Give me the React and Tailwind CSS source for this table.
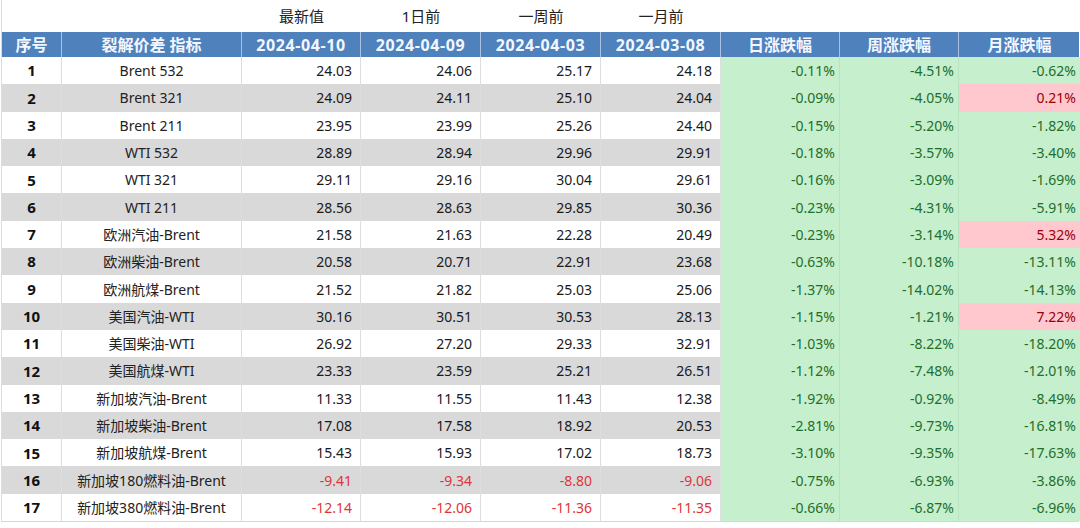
import React from "react";

const rows = [
  [1, "Brent 532", "24.03", "24.06", "25.17", "24.18", "-0.11%", "-4.51%", "-0.62%"],
  [2, "Brent 321", "24.09", "24.11", "25.10", "24.04", "-0.09%", "-4.05%", "0.21%"],
  [3, "Brent 211", "23.95", "23.99", "25.26", "24.40", "-0.15%", "-5.20%", "-1.82%"],
  [4, "WTI 532", "28.89", "28.94", "29.96", "29.91", "-0.18%", "-3.57%", "-3.40%"],
  [5, "WTI 321", "29.11", "29.16", "30.04", "29.61", "-0.16%", "-3.09%", "-1.69%"],
  [6, "WTI 211", "28.56", "28.63", "29.85", "30.36", "-0.23%", "-4.31%", "-5.91%"],
  [7, "欧洲汽油-Brent", "21.58", "21.63", "22.28", "20.49", "-0.23%", "-3.14%", "5.32%"],
  [8, "欧洲柴油-Brent", "20.58", "20.71", "22.91", "23.68", "-0.63%", "-10.18%", "-13.11%"],
  [9, "欧洲航煤-Brent", "21.52", "21.82", "25.03", "25.06", "-1.37%", "-14.02%", "-14.13%"],
  [10, "美国汽油-WTI", "30.16", "30.51", "30.53", "28.13", "-1.15%", "-1.21%", "7.22%"],
  [11, "美国柴油-WTI", "26.92", "27.20", "29.33", "32.91", "-1.03%", "-8.22%", "-18.20%"],
  [12, "美国航煤-WTI", "23.33", "23.59", "25.21", "26.51", "-1.12%", "-7.48%", "-12.01%"],
  [13, "新加坡汽油-Brent", "11.33", "11.55", "11.43", "12.38", "-1.92%", "-0.92%", "-8.49%"],
  [14, "新加坡柴油-Brent", "17.08", "17.58", "18.92", "20.53", "-2.81%", "-9.73%", "-16.81%"],
  [15, "新加坡航煤-Brent", "15.43", "15.93", "17.02", "18.73", "-3.10%", "-9.35%", "-17.63%"],
  [16, "新加坡180燃料油-Brent", "-9.41", "-9.34", "-8.80", "-9.06", "-0.75%", "-6.93%", "-3.86%"],
  [17, "新加坡380燃料油-Brent", "-12.14", "-12.06", "-11.36", "-11.35", "-0.66%", "-6.87%", "-6.96%"],
];

const grid =
  "grid grid-cols-[60px_180px_119px_120px_120px_120px_119px_119px_121px]";

const headers = ["序号", "裂解价差 指标", "2024-04-10", "2024-04-09", "2024-04-03", "2024-03-08", "日涨跌幅", "周涨跌幅", "月涨跌幅"];

export default function App() {
  return (
    <div
      className="w-[1080px] h-[528px] bg-white overflow-hidden text-[#1a1a1a]"
      style={{ fontFamily: '"Noto Sans", "Noto Sans CJK SC", sans-serif' }}
    >
      <div className="ml-px w-[1078px] border-l border-[#dcdcdc]">
        {/* title row */}
        <div className={`${grid} h-[32px] items-center text-[15px] text-[#222]`}>
          <div />
          <div />
          <div className="text-center">最新值</div>
          <div className="text-center">1日前</div>
          <div className="text-center">一周前</div>
          <div className="text-center">一月前</div>
          <div />
          <div />
          <div />
        </div>
        {/* header */}
        <div className={`${grid} h-[25px] bg-[#4f81bd] text-[#f2f7ff] font-bold`}>
          {headers.map((h, i) => (
            <div
              key={i}
              className={`flex items-center justify-center leading-none ${
                i < 2 ? "text-[16px]" : i < 6 ? "text-[16px] tracking-[0.6px]" : "text-[16px]"
              } ${i < 8 ? "border-r border-[#a9c1e3]" : ""}`}
            >
              {h}
            </div>
          ))}
        </div>
        {/* body */}
        <div className="border-b border-[#d6d6d6]">
          {rows.map((r) => {
            const gray = r[0] % 2 === 0;
            const bg = gray ? "bg-[#d9d9d9]" : "bg-white";
            return (
              <div key={r[0]} className={`${grid} h-[27.3px] text-[14px]`}>
                <div className={`${bg} flex items-center justify-center font-bold text-[15px] text-[#111] border-r border-[#dedede]`}>
                  {r[0]}
                </div>
                <div className={`${bg} flex items-center justify-center text-[#222] border-r border-[#dedede]`}>
                  {r[1]}
                </div>
                {[2, 3, 4, 5].map((j) => {
                  const neg = r[j].startsWith("-");
                  return (
                    <div
                      key={j}
                      className={`${bg} flex items-center justify-end pr-2 border-r border-[#dedede] ${
                        neg ? "text-[#e0343a]" : "text-[#1a1a1a]"
                      }`}
                    >
                      {r[j]}
                    </div>
                  );
                })}
                {[6, 7, 8].map((j) => {
                  const pos = !r[j].startsWith("-");
                  return (
                    <div
                      key={j}
                      className={`flex items-center justify-end pr-1 ${
                        pos ? "bg-[#ffc7ce] text-[#9c0006]" : "bg-[#c6efce] text-[#1f6e2a]"
                      } ${j < 8 ? "border-r border-[#b9e2c1]" : ""}`}
                    >
                      {r[j]}
                    </div>
                  );
                })}
              </div>
            );
          })}
        </div>
      </div>
    </div>
  );
}
